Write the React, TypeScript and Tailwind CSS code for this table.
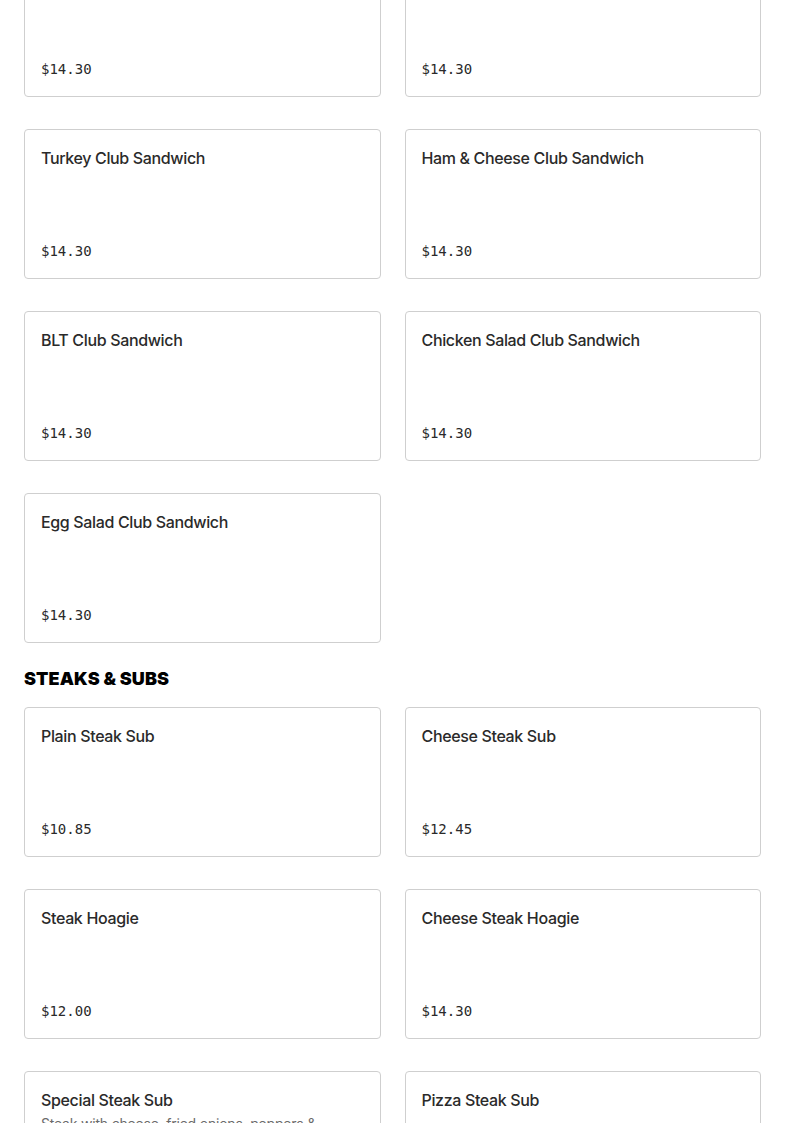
import React from "react";

type Item = { name: string; price: string; desc?: string };

const clubs: Item[] = [
  { name: "Club Sandwich", price: "$14.30" },
  { name: "Roast Beef Club Sandwich", price: "$14.30" },
  { name: "Turkey Club Sandwich", price: "$14.30" },
  { name: "Ham & Cheese Club Sandwich", price: "$14.30" },
  { name: "BLT Club Sandwich", price: "$14.30" },
  { name: "Chicken Salad Club Sandwich", price: "$14.30" },
  { name: "Egg Salad Club Sandwich", price: "$14.30" },
];

const steaks: Item[] = [
  { name: "Plain Steak Sub", price: "$10.85" },
  { name: "Cheese Steak Sub", price: "$12.45" },
  { name: "Steak Hoagie", price: "$12.00" },
  { name: "Cheese Steak Hoagie", price: "$14.30" },
  {
    name: "Special Steak Sub",
    price: "$14.30",
    desc: "Steak with cheese, fried onions, peppers & mushrooms.",
  },
  { name: "Pizza Steak Sub", price: "$14.30" },
];

function Card({ item }: { item: Item }) {
  return (
    <div className="flex h-[150px] flex-col justify-between rounded-[4px] border border-[#cfcfcf] bg-white p-4">
      <div>
        <div className="text-[16px] leading-6 font-medium text-[#2a2a2a] [font-family:Inter,'Noto_Sans',sans-serif] tracking-[-0.35px]">
          {item.name}
        </div>
        {item.desc && (
          <div className="mt-0.5 text-[14px] leading-5 tracking-[-0.2px] text-[#6b6b6b] [font-family:Inter,'Noto_Sans',sans-serif]">
            {item.desc}
          </div>
        )}
      </div>
      <div className="text-[14px] leading-[22px] text-[#2a2a2a] [font-family:'DejaVu_Sans_Mono','Liberation_Mono',monospace]">
        {item.price}
      </div>
    </div>
  );
}

export default function App() {
  return (
    <div className="min-h-screen bg-white px-6">
      <div className="-mt-[53px] grid grid-cols-2 gap-x-6 gap-y-8">
        {clubs.map((it) => (
          <Card key={it.name} item={it} />
        ))}
      </div>
      <h2 className="mt-[25px] mb-[17px] text-[18px] leading-[22px] font-black uppercase tracking-[0.1px] text-black [font-family:Inter,'Liberation_Sans',sans-serif]">
        Steaks &amp; Subs
      </h2>
      <div className="grid grid-cols-2 gap-x-6 gap-y-8">
        {steaks.map((it) => (
          <Card key={it.name} item={it} />
        ))}
      </div>
    </div>
  );
}
